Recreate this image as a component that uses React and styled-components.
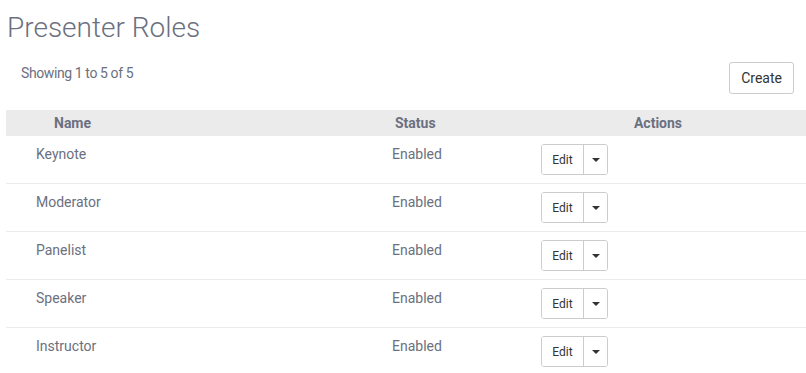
import styled, { createGlobalStyle } from "styled-components";

const Global = createGlobalStyle`
  body {
    margin: 0;
    background: #fff;
    font-family: Roboto, "Liberation Sans", sans-serif;
    color: #6b7080;
  }
`;

const Page = styled.div`
  padding: 0 0 0 6px;
`;

const Title = styled.h1`
  margin: 0;
  padding: 12px 0 0 1px;
  font-size: 28px;
  font-weight: 300;
  line-height: 32px;
  color: #6b7080;
`;

const Toolbar = styled.div`
  display: flex;
  justify-content: space-between;
  align-items: flex-start;
  padding: 18px 12px 16px 15px;
`;

const Count = styled.div`
  font-size: 14px;
  line-height: 16px;
  letter-spacing: -0.4px;
  padding-top: 3px;
`;

const Button = styled.button`
  font-family: inherit;
  font-size: 14px;
  color: #333;
  background: #fff;
  border: 1px solid #ccc;
  border-radius: 3px;
  height: 32px;
  padding: 0 11px;
  cursor: pointer;
`;

const Table = styled.div`
  display: grid;
  grid-template-columns: 380px 124px 1fr;
`;

const Head = styled.div`
  background: #ebebeb;
  height: 26px;
  line-height: 26px;
  font-size: 14px;
  font-weight: 700;
  padding-left: ${(p) => p.$pl || 0}px;
  text-align: ${(p) => p.$align || "left"};
`;

const Cell = styled.div`
  box-sizing: border-box;
  height: 48px;
  border-bottom: 1px solid #ebebeb;
  font-size: 14px;
  line-height: 16px;
  padding: 10px 0 0 ${(p) => p.$pl || 0}px;
`;

const ActionCell = styled(Cell)`
  padding-top: 8px;
`;

const Group = styled.div`
  display: inline-flex;
  height: 31px;
  border: 1px solid #ccc;
  border-radius: 3px;
  box-sizing: border-box;
  overflow: hidden;
`;

const GroupBtn = styled.button`
  font-family: inherit;
  font-size: 12px;
  color: #333;
  background: #fff;
  border: none;
  padding: 0;
  width: ${(p) => p.$w}px;
  display: flex;
  align-items: center;
  justify-content: center;
  cursor: pointer;
  & + & {
    border-left: 1px solid #ccc;
  }
`;

const Caret = styled.span`
  width: 0;
  height: 0;
  border-left: 4px solid transparent;
  border-right: 4px solid transparent;
  border-top: 4px solid #333;
`;

const roles = ["Keynote", "Moderator", "Panelist", "Speaker", "Instructor"];

export default function App() {
  return (
    <Page>
      <Global />
      <Title>Presenter Roles</Title>
      <Toolbar>
        <Count>Showing 1 to 5 of 5</Count>
        <Button>Create</Button>
      </Toolbar>
      <Table>
        <Head $pl={48}>Name</Head>
        <Head $pl={9}>Status</Head>
        <Head $align="center">Actions</Head>
        {roles.map((r) => (
          <>
            <Cell key={r + "n"} $pl={30}>{r}</Cell>
            <Cell key={r + "s"} $pl={6}>Enabled</Cell>
            <ActionCell key={r + "a"} $pl={31}>
              <Group>
                <GroupBtn $w={41}>Edit</GroupBtn>
                <GroupBtn $w={24}><Caret /></GroupBtn>
              </Group>
            </ActionCell>
          </>
        ))}
      </Table>
    </Page>
  );
}
